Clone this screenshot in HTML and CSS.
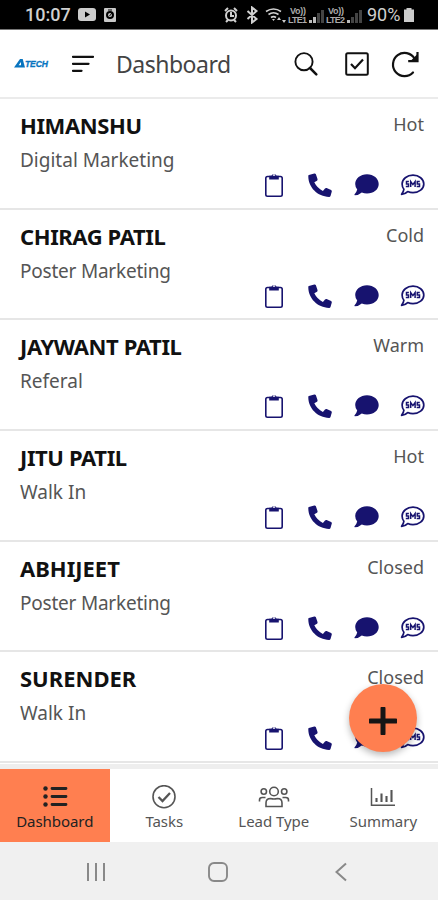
FILE: index.html
```html
<!DOCTYPE html>
<html lang="en">
<head>
<meta charset="utf-8">
<meta name="viewport" content="width=device-width, initial-scale=1">
<title>Dashboard</title>
<link rel="stylesheet" href="styles.css">
</head>
<body>
<svg class="sprite" aria-hidden="true">
  <symbol id="clip" viewBox="0 0 20 26"><path d="M3.500 4.500h13q1.700 0 1.700 1.700v16.400q0 1.700-1.700 1.700h-13q-1.700 0-1.700-1.700V6.200q0-1.700 1.700-1.700z" fill="none" stroke="currentColor" stroke-width="1.600"/><path fill="currentColor" fill-rule="evenodd" d="M5.200 3.800h2.200A2.800 2.800 0 0 1 12.600 3.800h2.200v3.600H5.200zM10 2.200a1.200 1.200 0 1 0 .01 0z"/></symbol>
  <symbol id="phone" viewBox="0 0 24 24"><path fill="currentColor" d="M.9 2 6.300.5Q7.400.3 7.900 1.300L9.500 6q.3 1-.5 1.700L6.300 9.300Q9 15 14.900 17.900l2.100-2.500q.7-.7 1.600-.4l4.500 2q.9.500.7 1.500l-1.300 4.500q-.3.900-1.400.9C9.500 23.500.3 14.500.3 3q0-.8.6-1z"/></symbol>
  <symbol id="chat" viewBox="0 0 25 22"><path fill="currentColor" d="M13 .3c6.600 0 11.700 4.300 11.700 9.700S19.600 19.500 13 19.500q-2.800 0-5.200-1Q4.800 21.200.8 21.200q-.8-.2-.2-.9 2-2.200 2.600-4.800Q1.200 13 1.200 10C1.200 4.600 6.400.3 13 .3z"/></symbol>
  <symbol id="sms" viewBox="0 0 25 22"><path fill="none" stroke="currentColor" stroke-width="1.700" stroke-linejoin="round" d="M13 1.200c6 0 10.800 3.900 10.800 8.800S19 18.700 13 18.700q-2.900 0-5.300-1.100Q5 20.300 1.600 20.400q2-2.500 2.300-5.200Q2.100 13 2.100 10C2.100 5.100 7 1.200 13 1.200z"/><path fill="none" stroke="currentColor" stroke-width="1.500" d="M8.900 7.600H6.500v2.300h2v2.700H5.800M10.700 13V7.600l2.200 3 2.200-3V13M19.800 7.600h-2.500v2.300h2.200v2.700h-2.800"/></symbol>
</svg>
<div class="screen">
  <div class="status">
    <span class="clock">10:07</span>
    <svg class="st-video" viewBox="0 0 18 13"><rect width="18" height="13" rx="3" fill="#ccc"/><path d="M7 3.500v6l5-3z" fill="#000"/></svg>
    <svg class="st-app" viewBox="0 0 12 14"><rect width="12" height="14" rx="1" fill="#c8c8c8"/><circle cx="6" cy="7" r="3" fill="none" stroke="#000" stroke-width="2"/><path d="M4 2h4M5.500 8 8 5" stroke="#000"/></svg>
    <svg class="st-right" viewBox="0 0 142 18">
      <g fill="none" stroke="#d0d0d0" stroke-width="2"><circle cx="8" cy="9.500" r="5"/><path d="M8 6v4h3M2 5l3-3M14 5l-3-3M3 16l2-2M13 16l-2-2M24.500 5l9 8-4.500 3.500V1.500L33.500 5l-9 8"/><path d="M43 5.500q7.500-5 15 0M45.500 8.500q5-3.500 10 0M48 11.500q2.500-1.700 5 0" stroke-width="1.600"/></g>
      <path d="M49 13h3l-1.500 2zM54 14l2-3 2 3zM59 14h4l-2 3z" fill="#ccc"/>
      <g class="carrier"><text x="67" y="8" textLength="16">Vo))</text><text x="65" y="17" textLength="19">LTE1</text><text x="105" y="8" textLength="16">Vo))</text><text x="103" y="17" textLength="19">LTE2</text></g>
      <path d="M86 14h3v3h-3zM90 11h3v6h-3zM124 14h3v3h-3z" fill="#bbb"/><path d="M94 7h3v10h-3zM98 4h3v13h-3zM128 11h3v6h-3zM132 7h3v10h-3zM136 4h3v13h-3z" fill="#444"/>
    </svg>
    <span class="percent">90%</span>
    <svg class="st-battery" viewBox="0 0 10 14"><path d="M2.500 0h5v1.500H10V14H0V1.500h2.500z" fill="#ccc"/></svg>
  </div>
  <header class="appbar">
    <div class="logo"><svg class="logo-mark" viewBox="0 0 11 9"><path d="M0 8.500 6 0h2.700L11 8.500z" fill="#0874bf"/><path d="M4.600 6.300 7 3v3.300z" fill="#fff"/></svg><span>TECH</span></div>
    <svg class="menu" viewBox="0 0 22 18"><path d="M1 1.800h20M1 8.800h15.500M1 15.800h8.500" fill="none" stroke="#111" stroke-width="2.300" stroke-linecap="round"/></svg>
    <h1>Dashboard</h1>
    <svg class="search" viewBox="0 0 24 24"><circle cx="10" cy="9.700" r="8.600" fill="none" stroke="#111" stroke-width="1.900"/><path d="m16 16 6.300 6.300" stroke="#111" stroke-width="2.500" stroke-linecap="round"/></svg>
    <svg class="check" viewBox="0 0 24 24"><rect x="1.200" y="1.200" width="21.600" height="21.600" rx="1.500" fill="none" stroke="#111" stroke-width="2"/><path d="m6 12 4 4.200 8-8.700" fill="none" stroke="#111" stroke-width="2.200"/></svg>
    <svg class="refresh" viewBox="0 0 28 28"><path d="M22 22.500A11.600 11.600 0 1 1 23.500 8.500" fill="none" stroke="#111" stroke-width="2.200" stroke-linecap="round"/><path d="M26.500 2v9.200h-9.300" fill="none" stroke="#111" stroke-width="2.200"/><path d="M26 4.500v6h-6z" fill="#111"/></svg>
  </header>
  <main class="leads">
    <article class="lead"><div class="info"><h2>HIMANSHU</h2><p>Digital Marketing</p></div><span class="state">Hot</span><div class="actions"><svg class="i-clip"><use href="#clip"/></svg><svg class="i-phone"><use href="#phone"/></svg><svg class="i-chat"><use href="#chat"/></svg><svg class="i-sms"><use href="#sms"/></svg></div></article>
    <article class="lead"><div class="info"><h2>CHIRAG PATIL</h2><p class="tight">Poster Marketing</p></div><span class="state">Cold</span><div class="actions"><svg class="i-clip"><use href="#clip"/></svg><svg class="i-phone"><use href="#phone"/></svg><svg class="i-chat"><use href="#chat"/></svg><svg class="i-sms"><use href="#sms"/></svg></div></article>
    <article class="lead"><div class="info"><h2>JAYWANT PATIL</h2><p>Referal</p></div><span class="state">Warm</span><div class="actions"><svg class="i-clip"><use href="#clip"/></svg><svg class="i-phone"><use href="#phone"/></svg><svg class="i-chat"><use href="#chat"/></svg><svg class="i-sms"><use href="#sms"/></svg></div></article>
    <article class="lead"><div class="info"><h2>JITU PATIL</h2><p>Walk In</p></div><span class="state">Hot</span><div class="actions"><svg class="i-clip"><use href="#clip"/></svg><svg class="i-phone"><use href="#phone"/></svg><svg class="i-chat"><use href="#chat"/></svg><svg class="i-sms"><use href="#sms"/></svg></div></article>
    <article class="lead"><div class="info"><h2 class="wide">ABHIJEET</h2><p class="tight">Poster Marketing</p></div><span class="state">Closed</span><div class="actions"><svg class="i-clip"><use href="#clip"/></svg><svg class="i-phone"><use href="#phone"/></svg><svg class="i-chat"><use href="#chat"/></svg><svg class="i-sms"><use href="#sms"/></svg></div></article>
    <article class="lead"><div class="info"><h2 class="wide">SURENDER</h2><p>Walk In</p></div><span class="state">Closed</span><div class="actions"><svg class="i-clip"><use href="#clip"/></svg><svg class="i-phone"><use href="#phone"/></svg><svg class="i-chat"><use href="#chat"/></svg><svg class="i-sms"><use href="#sms"/></svg></div></article>
  </main>
  <button class="fab" aria-label="Add"><svg viewBox="0 0 28 28"><path d="M14 1.500v25M1.500 14h25" stroke="#151515" stroke-width="5" stroke-linecap="round"/></svg></button>
  <nav class="tabs">
    <a class="tab active"><svg viewBox="0 0 32 24"><path d="M13 3.500h14M13 11.500h14M13 19.500h14" stroke="currentColor" stroke-width="2.800" stroke-linecap="round"/><g fill="currentColor"><circle cx="6.500" cy="3.500" r="2.200"/><circle cx="6.500" cy="11.500" r="2.200"/><circle cx="6.500" cy="19.500" r="2.200"/></g></svg><span>Dashboard</span></a>
    <a class="tab"><svg viewBox="0 0 32 24"><g fill="none" stroke="currentColor"><circle cx="16" cy="11.700" r="11" stroke-width="1.600"/><path d="m10.500 12 4 4 7.500-8" stroke-width="2.300"/></g></svg><span>Tasks</span></a>
    <a class="tab"><svg viewBox="0 0 32 24"><g fill="none" stroke="currentColor" stroke-width="1.600"><circle cx="16" cy="6.500" r="4.300"/><circle cx="5.800" cy="6.500" r="2.700"/><circle cx="26.200" cy="6.500" r="2.700"/><path d="M8 21.500v-3.500q0-4.500 4.500-4.500 3.500 1 7 0 4.500 0 4.500 4.500v3.500zM1.500 16.500v-1.500q0-2.500 2.800-2.500H7.500M30.500 16.500v-1.500q0-2.500-2.800-2.500H24.500"/></g></svg><span>Lead Type</span></a>
    <a class="tab"><svg viewBox="0 0 32 24"><g fill="none" stroke="currentColor"><path d="M4.500 3v17.200H28" stroke-width="1.500"/><path d="M9.500 13v4M14.500 8.500V17M19.500 11v6M24.500 5v12" stroke-width="2.100"/></g></svg><span>Summary</span></a>
  </nav>
  <div class="sysnav">
    <svg viewBox="0 0 24 24"><path d="M4 3v18M12 3v18M20 3v18" stroke="#898989" stroke-width="2"/></svg>
    <svg viewBox="0 0 24 24"><rect x="3" y="3" width="18" height="18" rx="5" fill="none" stroke="#898989" stroke-width="1.900"/></svg>
    <svg viewBox="0 0 24 24"><path d="M17 3.500 7.500 12l9.500 8.500" fill="none" stroke="#898989" stroke-width="2"/></svg>
  </div>
</div>
</body>
</html>
```
FILE: styles.css
```css
* { box-sizing: border-box; }
body { margin: 0; background: #fff; font-family: "Noto Sans", sans-serif; }
h1, h2, p { margin: 0; }
svg { display: block; flex: none; }
.sprite { position: absolute; width: 0; height: 0; }
.screen { position: relative; width: 438px; height: 900px; overflow: hidden; display: flex; flex-direction: column; }

.status { height: 30px; flex: none; background: #000; border-bottom: 1px solid #777; color: #d0d0d0; display: flex; align-items: center; padding-left: 25px; font-family: Roboto, sans-serif; }
.clock { width: 53px; font-size: 18px; font-weight: 500; line-height: 30px; }
.st-video { width: 18px; height: 13px; }
.st-app { width: 12px; height: 14px; margin-left: 8px; }
.st-right { width: 142px; height: 18px; margin-left: 107px; }
.carrier { font: 700 9px "Liberation Sans", sans-serif; fill: #aaa; }
.percent { width: 37px; font-size: 18px; margin-left: 2px; line-height: 30px; }
.st-battery { width: 10px; height: 14px; }

.appbar { height: 69px; flex: none; border-bottom: 2px solid #ebebeb; display: flex; align-items: center; padding-left: 14px; }
.logo { width: 58px; display: flex; align-items: center; }
.logo-mark { width: 11px; height: 9px; }
.logo span { color: #0874bf; font: italic 700 8.500px/10px "Liberation Sans", sans-serif; letter-spacing: -.1px; -webkit-text-stroke: .3px #0874bf; }
.menu { width: 22px; height: 18px; }
h1 { width: 200px; margin-left: 22px; font-size: 23px; line-height: 32px; font-weight: 400; color: #444; letter-spacing: -.5px; }
.search { width: 24px; height: 24px; margin-left: -22px; }
.check { width: 24px; height: 24px; margin-left: 27px; }
.refresh { width: 28px; height: 28px; margin-left: 22px; }

.leads { height: 665px; flex: none; overflow: hidden; }
.lead { height: 110.700px; border-bottom: 2px solid #e6e6e6; padding: 11px 13px 0 20px; display: grid; grid-template: 63px 24px / 1fr auto; }
h2 { font-size: 22px; line-height: 31px; font-weight: 700; color: #111; letter-spacing: -.4px; }
h2.wide { letter-spacing: 0; }
.info p { font-size: 19px; line-height: 38px; color: #555; }
.info p.tight { letter-spacing: -.22px; }
.state { justify-self: end; font-size: 18px; line-height: 28px; color: #555; margin-right: 1px; }
.actions { grid-column: 1 / 3; justify-self: end; display: flex; align-items: center; color: #17136f; }
.i-clip { width: 20px; height: 26px; }
.i-phone { width: 24px; height: 24px; margin-left: 24px; }
.i-chat { width: 25px; height: 22px; margin-left: 22px; }
.i-sms { width: 25px; height: 22px; margin-left: 21px; }

.fab { position: absolute; left: 349px; top: 684px; width: 68px; height: 68px; border: 0; border-radius: 50%; padding: 5px 0 0; background: #ff7f50; display: grid; place-items: center; box-shadow: 0 3px 7px rgba(0, 0, 0, .28); }
.fab svg { width: 28px; height: 28px; }

.tabs { height: 78px; flex: none; display: grid; grid-template-columns: repeat(4, 1fr); border-top: 5px solid #eee; background: #fff; }
.tab { color: #555; display: flex; flex-direction: column; align-items: center; padding-top: 16px; }
.tab svg { width: 32px; height: 24px; }
.tab span { font-size: 15px; line-height: 25px; letter-spacing: -.05px; }
.active { background: #ff7f50; color: #222; }
.sysnav { flex: 1; background: #f0f0f0; display: grid; grid-template-columns: 192px 52px 194px; justify-items: center; align-items: center; padding-bottom: 0; }
.sysnav svg { width: 24px; height: 24px; margin-top: 2px; }
```
